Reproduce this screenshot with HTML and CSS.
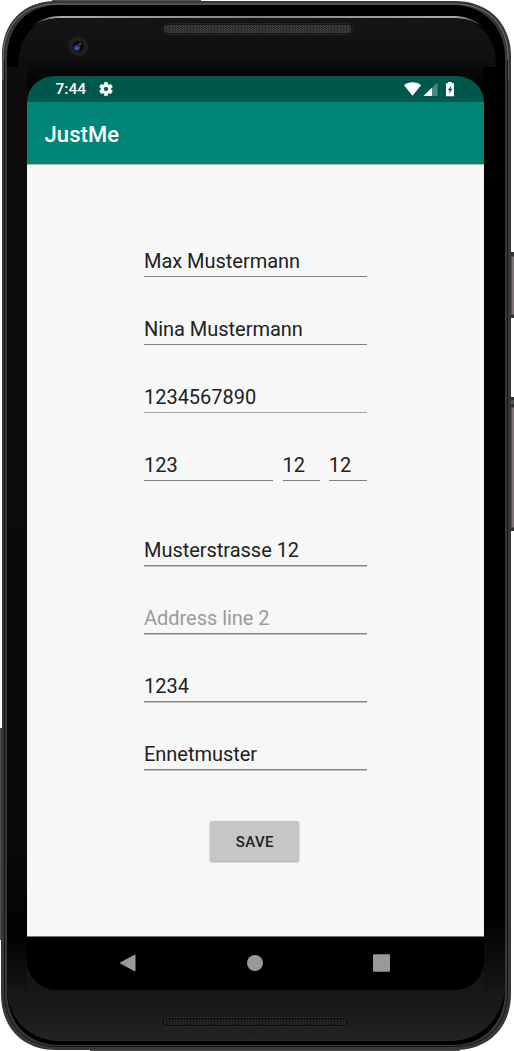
FILE: index.html
```html
<!DOCTYPE html>
<html lang="en">
<head>
<meta charset="utf-8">
<title>JustMe</title>
<link rel="stylesheet" href="styles.css">
</head>
<body>
<div class="phone">
  <svg class="shell" width="514" height="1051" viewBox="0 0 514 1051" aria-hidden="true">
    <defs>
      <linearGradient id="face" x1="0" y1="0" x2="0" y2="1">
        <stop offset="0" stop-color="#151515"/><stop offset=".04" stop-color="#101010"/>
        <stop offset=".065" stop-color="#030303"/><stop offset=".5" stop-color="#050505"/>
        <stop offset=".87" stop-color="#000"/><stop offset=".93" stop-color="#151515"/>
        <stop offset=".97" stop-color="#191919"/><stop offset="1" stop-color="#242424"/>
      </linearGradient>
      <linearGradient id="left" x1="0" y1="0" x2="0" y2="1">
        <stop offset="0" stop-color="#0d0d0d"/><stop offset=".85" stop-color="#090909"/>
        <stop offset=".94" stop-color="#010101"/><stop offset="1" stop-color="#151515"/>
      </linearGradient>
      <linearGradient id="right" x1="0" y1="0" x2="0" y2="1">
        <stop offset="0" stop-color="#000"/><stop offset=".92" stop-color="#000"/>
        <stop offset="1" stop-color="#151515"/>
      </linearGradient>
      <linearGradient id="shine" x1="0" y1="0" x2="1" y2="0">
        <stop offset="0" stop-color="#aaa" stop-opacity=".4"/><stop offset=".06" stop-color="#aaa"/>
        <stop offset=".5" stop-color="#858585"/><stop offset=".94" stop-color="#aaa"/>
        <stop offset="1" stop-color="#aaa" stop-opacity=".4"/>
      </linearGradient>
      <pattern id="mesh" width="3" height="2" patternUnits="userSpaceOnUse">
        <rect width="3" height="2" fill="#2d2b28"/><rect width="1" height="1" fill="#4a4640"/><rect x="2" y="1" width="1" height="1" fill="#46423c"/>
      </pattern>
      <pattern id="mesh-dark" width="3" height="2" patternUnits="userSpaceOnUse">
        <rect width="3" height="2" fill="#171613"/><rect width="1" height="1" fill="#37342d"/><rect x="2" y="1" width="1" height="1" fill="#302e28"/>
      </pattern>
    </defs>
    <path fill="#555" d="M509 252h5v66h-5zM509 397h5v134h-5z"/>
    <path fill="#7d7477" d="M512 257h2v57h-2zM512 408h2v119h-2z"/>
    <path fill="#333" d="M511 252h3v4h-3zM511 315h3v3h-3zM511 397h3v3h-3zM511 404h3v3h-3zM511 528h3v3h-3z"/>
    <path fill="#515252" d="M52 0H201V2H52zM0 728H4V940H0zM90 1046H460V1051H90z"/>
    <path fill="#363737" d="M56 1H455C489 1 511 24 511 56V994C511 1028 488 1050 455 1050H56C23 1050 1 1028 1 994V728H2V56C2 23 23 1 56 1Z"/>
    <path fill="none" stroke="#707171" d="M3 80V58C3 24 24 4 57 4H454C488 4 508 25 508 57V80"/>
    <path fill="none" stroke="#141515" d="M4.500 60V993C4.500 1025 26 1046.500 57 1046.500H454C486 1046.500 507.500 1025 507.500 993V60"/>
    <path fill="#000" d="M59 5H452C484 5 505 27 505 58V991C505 1023 484 1045 452 1045H59C28 1045 7 1023 7 991V58C7 27 27 5 59 5Z"/>
    <path fill="url(#face)" d="M60 16H454C480 20 496 38 496 64V950H505V990C501 1020 480 1041 450 1041H60C31 1041 8 1020 7 990V67H18C18 40 34 17 60 16Z"/>
    <path fill="url(#left)" d="M7 67H27V990H7z"/>
    <path fill="url(#right)" d="M484 67H505V990H484z"/>
    <path fill="url(#shine)" d="M31 27C41 19 50 16 62 16H454C466 16 475 20 483 27C473 20 465 18 453 18H61C49 18 41 20 31 27Z"/>
    <rect x="162.500" y="23.500" width="190" height="11" rx="5.500" fill="#090909" stroke="#242424"/>
    <rect x="164" y="25" width="187" height="8" rx="4" fill="url(#mesh)" stroke="#444039" stroke-width=".5"/>
    <rect x="161.500" y="1017.500" width="187" height="9" rx="4.500" fill="#0b0b0b" stroke="#282828"/>
    <rect x="163" y="1019" width="184" height="6" rx="3" fill="url(#mesh-dark)"/>
    <circle cx="78.300" cy="46.300" r="9.800" fill="#202020"/>
    <circle cx="78.300" cy="46.300" r="5.500" fill="#080a12"/>
    <circle cx="77" cy="47.700" r="3" fill="#263b8b"/>
    <circle cx="76.500" cy="48.500" r="1.400" fill="#4760b4"/>
    <circle cx="80" cy="44" r="1.300" fill="#444a67"/>
  </svg>

  <main class="screen">
    <header class="status">
      <span class="clock">7:44</span>
      <svg class="gear" width="16" height="16" viewBox="0 0 24 24"><path fill="#fff" stroke="#fff" stroke-width=".5" d="M19.430 12.980c.04-.32.07-.64.07-.98s-.03-.66-.07-.98l2.110-1.650c.19-.15.24-.42.12-.64l-2-3.460c-.12-.22-.39-.3-.61-.22l-2.490 1c-.52-.4-1.080-.73-1.690-.98l-.38-2.650A.488.488 0 0 0 14 2h-4c-.25 0-.46.18-.49.42l-.38 2.650c-.61.25-1.170.59-1.690.98l-2.490-1c-.23-.09-.49 0-.61.22l-2 3.460c-.13.22-.07.49.12.64l2.110 1.650c-.04.32-.07.65-.07.98s.03.66.07.98l-2.110 1.650c-.19.15-.24.42-.12.64l2 3.460c.12.22.39.3.61.22l2.490-1c.52.4 1.080.73 1.690.98l.38 2.650c.03.24.24.42.49.42h4c.25 0 .46-.18.49-.42l.38-2.650c.61-.25 1.170-.59 1.690-.98l2.490 1c.23.09.49 0 .61-.22l2-3.460c.12-.22.07-.49-.12-.64l-2.110-1.650zM12 15.500a3.500 3.500 0 1 1 0-7 3.500 3.500 0 0 1 0 7z"/></svg>
      <svg class="signals" width="50" height="16" viewBox="0 0 50 16">
        <path fill="#fff" d="M0 4.200C4.500.4 12.500.4 17 4.200L8.500 14.800Z"/>
        <path fill="#fff" fill-opacity=".3" d="M33.500 1.500V15H19.500Z"/>
        <path fill="#fff" d="M28 6.800V15H19.500Z"/>
        <path fill="#fff" d="M44 1h4v1.300h2V15.300h-8V2.300h2z"/>
        <path fill="#00574b" d="M47.200 4.500L43.800 9.200h2L45 12.800l3.500-5h-2z"/>
      </svg>
    </header>
    <div class="appbar">JustMe</div>
    <form class="form">
      <div class="field">Max Mustermann</div>
      <div class="field">Nina Mustermann</div>
      <div class="field light">1234567890</div>
      <div class="row">
        <div class="field">123</div>
        <div class="field">12</div>
        <div class="field">12</div>
      </div>
      <div class="field soft address">Musterstrasse 12</div>
      <div class="field soft hint">Address line 2</div>
      <div class="field soft">1234</div>
      <div class="field soft">Ennetmuster</div>
      <button class="save" type="button">SAVE</button>
    </form>
    <nav class="nav">
      <svg width="18" height="20" viewBox="0 0 18 20"><path fill="#999" stroke="#999" stroke-linejoin="round" d="M16 2V18L1.200 10Z"/></svg>
      <svg width="18" height="20" viewBox="0 0 18 20"><circle cx="9" cy="10" r="8" fill="#999"/></svg>
      <svg width="18" height="20" viewBox="0 0 18 20"><rect x="1" y="1.300" width="17" height="17.500" rx="1" fill="#999"/></svg>
    </nav>
  </main>
</div>
</body>
</html>
```

FILE: styles.css
```css
* { box-sizing: border-box; }
body {
  margin: 0;
  background: #fff;
  font-family: Roboto, sans-serif;
}
.phone {
  display: grid;
  width: 514px;
  height: 1051px;
  overflow: hidden;
}
.shell, .screen { grid-area: 1 / 1; }
.screen {
  display: flex;
  flex-direction: column;
  width: 457px;
  height: 914px;
  margin: 76px 0 0 27px;
  z-index: 1;
}
.status {
  display: flex;
  flex: none;
  align-items: center;
  height: 26px;
  padding: 0 30px 0 28.500px;
  border-radius: 28px 28px 0 0 / 26px 26px 0 0;
  background: #00574b;
}
.clock {
  color: #fff;
  font-size: 15.500px;
  font-weight: 500;
  line-height: 27px;
}
.gear { margin-left: 12px; }
.signals { margin-left: auto; }
.appbar {
  flex: none;
  height: 62px;
  padding-left: 17.500px;
  background: #008577;
  color: #fff;
  font-size: 22px;
  font-weight: 500;
  letter-spacing: .1px;
  line-height: 65px;
}
.form {
  display: flex;
  flex: 1;
  flex-direction: column;
  gap: 32px;
  padding: 77px 117.400px 0 117px;
  background: #f7f7f7;
  box-shadow: inset 0 1px 1px rgba(0, 0, 0, .3);
}
.field {
  height: 36px;
  border-bottom: 1px solid #828282;
  color: #212121;
  font-size: 20px;
  letter-spacing: -.03px;
  line-height: 40px;
  white-space: nowrap;
}
.light { border-color: #a3a3a3; }
.row {
  display: grid;
  grid-template-columns: 129.400px 37px 38px;
  gap: 9.200px;
}
.address { margin-top: 17px; }
.soft { box-shadow: 0 1px #c4c4c4; }
.hint { color: #9b9b9b; }
.save {
  align-self: flex-start;
  width: 89px;
  height: 40px;
  margin: 19px 0 0 66.400px;
  padding: 1px 0 0;
  border: 0;
  border-radius: 2px;
  background: #c5c7c6;
  box-shadow: 0 1px 2px rgba(0, 0, 0, .35);
  color: #202020;
  font: 500 15px Roboto, sans-serif;
  letter-spacing: .4px;
}
.nav {
  display: flex;
  flex: none;
  align-items: center;
  justify-content: space-between;
  height: 54px;
  padding: 0 94px 2px 92px;
  border-top: 1px solid #777;
  border-radius: 0 0 29px 29px;
  background: #000;
}
```
